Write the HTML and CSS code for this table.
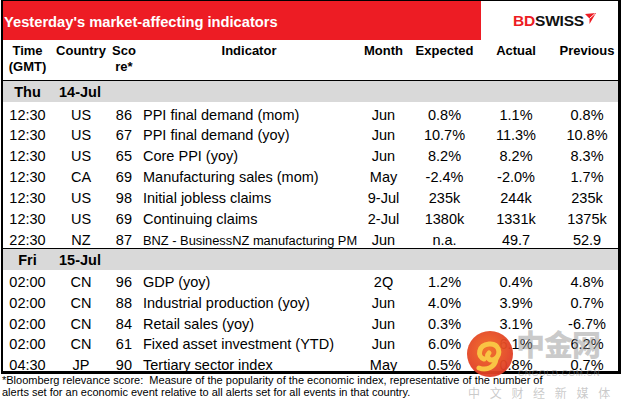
FILE: index.html
```html
<!DOCTYPE html>
<html>
<head>
<meta charset="utf-8">
<link rel="stylesheet" href="styles.css">
</head>
<body>
<div class="sheet">
  <div class="banner">
    <div class="title">Yesterday's market-affecting indicators</div>
    <div class="brand"><span class="bd">BD</span><span class="sw">SWISS</span><svg class="plane" width="11" height="11" viewBox="0 0 11 11"><polygon points="0,1 11,0 4.5,11 4.5,5.5" fill="#ED1C24"/><line x1="4.5" y1="5.5" x2="10" y2="0.6" stroke="#fff" stroke-width="1"/></svg></div>
  </div>
  <div class="row colhead">
    <div class="c">Time<br>(GMT)</div>
    <div class="c">Country</div>
    <div class="c">Sco<br>re*</div>
    <div class="c">Indicator</div>
    <div class="c">Month</div>
    <div class="c">Expected</div>
    <div class="c">Actual</div>
    <div class="c p">Previous</div>
  </div>

  <div class="row day"><div class="c">Thu</div><div class="dl">14-Jul</div></div>
  <div class="row data"><div class="c">12:30</div><div class="c">US</div><div class="s">86</div><div class="i">PPI final demand (mom)</div><div class="c">Jun</div><div class="c">0.8%</div><div class="c">1.1%</div><div class="c p">0.8%</div></div>
  <div class="row data"><div class="c">12:30</div><div class="c">US</div><div class="s">67</div><div class="i">PPI final demand (yoy)</div><div class="c">Jun</div><div class="c">10.7%</div><div class="c">11.3%</div><div class="c p">10.8%</div></div>
  <div class="row data"><div class="c">12:30</div><div class="c">US</div><div class="s">65</div><div class="i">Core PPI (yoy)</div><div class="c">Jun</div><div class="c">8.2%</div><div class="c">8.2%</div><div class="c p">8.3%</div></div>
  <div class="row data"><div class="c">12:30</div><div class="c">CA</div><div class="s">69</div><div class="i">Manufacturing sales (mom)</div><div class="c">May</div><div class="c">-2.4%</div><div class="c">-2.0%</div><div class="c p">1.7%</div></div>
  <div class="row data"><div class="c">12:30</div><div class="c">US</div><div class="s">98</div><div class="i">Initial jobless claims</div><div class="c">9-Jul</div><div class="c">235k</div><div class="c">244k</div><div class="c p">235k</div></div>
  <div class="row data"><div class="c">12:30</div><div class="c">US</div><div class="s">69</div><div class="i">Continuing claims</div><div class="c">2-Jul</div><div class="c">1380k</div><div class="c">1331k</div><div class="c p">1375k</div></div>
  <div class="row data"><div class="c">22:30</div><div class="c">NZ</div><div class="s">87</div><div class="i shrink">BNZ - BusinessNZ manufacturing PM</div><div class="c">Jun</div><div class="c">n.a.</div><div class="c">49.7</div><div class="c p">52.9</div></div>

  <div class="row day"><div class="c">Fri</div><div class="dl">15-Jul</div></div>
  <div class="row data fri"><div class="c">02:00</div><div class="c">CN</div><div class="s">96</div><div class="i">GDP (yoy)</div><div class="c">2Q</div><div class="c">1.2%</div><div class="c">0.4%</div><div class="c p">4.8%</div></div>
  <div class="row data fri"><div class="c">02:00</div><div class="c">CN</div><div class="s">88</div><div class="i">Industrial production (yoy)</div><div class="c">Jun</div><div class="c">4.0%</div><div class="c">3.9%</div><div class="c p">0.7%</div></div>
  <div class="row data fri"><div class="c">02:00</div><div class="c">CN</div><div class="s">84</div><div class="i">Retail sales (yoy)</div><div class="c">Jun</div><div class="c">0.3%</div><div class="c">3.1%</div><div class="c p">-6.7%</div></div>
  <div class="row data fri"><div class="c">02:00</div><div class="c">CN</div><div class="s">61</div><div class="i">Fixed asset investment (YTD)</div><div class="c">Jun</div><div class="c">6.0%</div><div class="c">6.1%</div><div class="c p">6.2%</div></div>
  <div class="row data fri last"><div class="c">04:30</div><div class="c">JP</div><div class="s">90</div><div class="i">Tertiary sector index</div><div class="c">May</div><div class="c">0.5%</div><div class="c">0.8%</div><div class="c p">0.7%</div></div>
</div>
<div class="note">*Bloomberg relevance score:&nbsp; Measure of the popularity of the economic index, representative of the number of<br>alerts set for an economic event relative to all alerts set for all events in that country.</div>

<div class="watermark">
  <svg class="wm-logo" width="48" height="48" viewBox="0 0 48 48">
    <defs>
      <radialGradient id="wg" cx="0.45" cy="0.4" r="0.6">
        <stop offset="0" stop-color="#f26b22"/>
        <stop offset="1" stop-color="#df3b26"/>
      </radialGradient>
    </defs>
    <circle cx="24" cy="24" r="23" fill="url(#wg)"/>
    <path d="M18 29 C11 27 12 15 23 14 C33 13 36 24 29 29 C24 32 19 27 23 23" stroke="#f9c13b" stroke-width="5" fill="none" stroke-linecap="round"/>
    <path d="M30 29 C29 37 21 41 13 38" stroke="#f9c13b" stroke-width="5" fill="none" stroke-linecap="round"/>
  </svg>
  <div class="wm-big">中金网</div>
  <div class="wm-url">CNGOLD.COM.CN</div>
  <div class="wm-sub">中 文 财 经 新 媒 体</div>
</div>
</body>
</html>
```
FILE: styles.css
```css
body {
  margin: 0;
  font-family: "Liberation Sans", Arial, sans-serif;
  color: #000;
  background: #fff;
}

.sheet {
  width: 615px;
  margin-left: 1px;
  border-style: solid;
  border-color: #000;
  border-width: 1px 3px 3px 2px;
}

.banner {
  display: flex;
  height: 39px;
}

.title {
  width: 477px;
  padding: 2px 0 0 1px;
  background: #ED1C24;
  color: #fff;
  font-weight: bold;
  font-size: 14.7px;
  display: flex;
  align-items: center;
  height: 37px;
}

.brand {
  flex: 1;
  display: flex;
  align-items: center;
  padding-left: 32px;
  padding-top: 1px;
  font-weight: bold;
  font-size: 15.5px;
  letter-spacing: -0.2px;
}

.bd { color: #ED1C24; }
.sw { color: #111; }
.plane { margin-left: 1px; margin-top: -6px; }

.row {
  display: grid;
  grid-template-columns: 49px 58px 28px 222px 47px 75px 68px 68px;
  white-space: nowrap;
}

.c { text-align: center; }
.p { padding-left: 6px; }
.s { text-align: right; padding-right: 6px; }
.i { padding-left: 5px; }
.shrink { font-size: 12.85px; }

.colhead {
  height: 40px;
  box-sizing: border-box;
  padding-top: 3px;
  font-weight: bold;
  font-size: 13px;
  line-height: 16px;
}

.day {
  height: 22px;
  box-sizing: border-box;
  border-top: 1px solid #000;
  background: #D9D9D9;
  padding-top: 3px;
  font-weight: bold;
  font-size: 14.5px;
  line-height: 17px;
}

.dl { padding-left: 7px; }

.data {
  height: 20.857px;
  box-sizing: border-box;
  padding-top: 4.5px;
  font-size: 14.5px;
  line-height: 17px;
}

.data.fri { height: 20.67px; }
.data.fri.last { height: 18.8px; }

.note {
  font-size: 11px;
  line-height: 12px;
  padding-left: 2px;
  white-space: nowrap;
}

.watermark {
  position: absolute;
  left: 466px;
  top: 326px;
  width: 150px;
  height: 74px;
  pointer-events: none;
}

.wm-logo {
  position: absolute;
  left: 0;
  top: 4px;
  opacity: 0.95;
}

.wm-big {
  position: absolute;
  left: 50px;
  top: -1px;
  font-family: "Noto Sans CJK SC", sans-serif;
  font-weight: 900;
  font-size: 29px;
  line-height: 36px;
  color: rgba(150, 150, 150, 0.5);
  letter-spacing: -1px;
}

.wm-url {
  position: absolute;
  left: 52px;
  top: 42px;
  font-size: 8.5px;
  letter-spacing: 0.7px;
  color: rgba(150, 150, 150, 0.55);
}

.wm-sub {
  position: absolute;
  left: 2px;
  top: 60px;
  font-family: "Noto Sans CJK SC", sans-serif;
  font-size: 12px;
  line-height: 13px;
  letter-spacing: 2px;
  word-spacing: 3px;
  color: rgba(150, 150, 150, 0.5);
  white-space: nowrap;
}
```
